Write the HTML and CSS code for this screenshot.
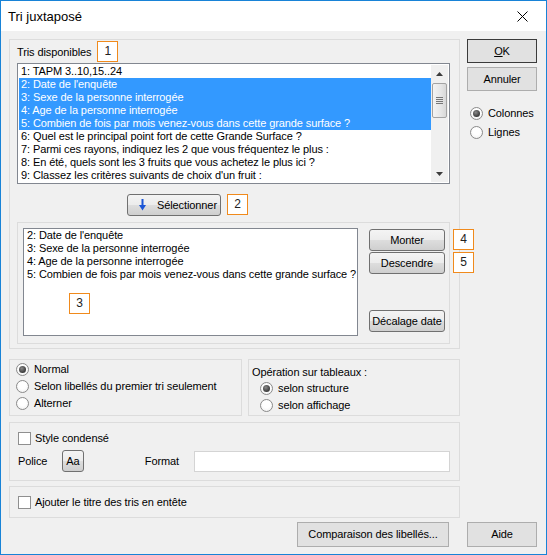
FILE: index.html
```html
<!DOCTYPE html>
<html lang="fr">
<head>
<meta charset="utf-8">
<title>Tri juxtaposé</title>
<link rel="stylesheet" href="styles.css">
</head>
<body>
<div class="window">
  <div class="titlebar">
    <span class="title">Tri juxtaposé</span>
    <svg class="close" width="11" height="11" viewBox="0 0 11 11"><path d="M0.5 0.5L10.5 10.5M10.5 0.5L0.5 10.5" stroke="#000" stroke-width="1" fill="none"/></svg>
  </div>
  <div class="body">
    <div class="top">
      <div class="group main">
        <div class="hdr"><span class="hdr-label">Tris disponibles</span><span class="tag tag-hdr">1</span></div>
        <div class="listbox">
          <div class="items">
            <div class="item">1: TAPM 3..10,15..24</div>
            <div class="item sel">2: Date de l'enquête</div>
            <div class="item sel">3: Sexe de la personne interrogée</div>
            <div class="item sel">4: Age de la personne interrogée</div>
            <div class="item sel">5: Combien de fois par mois venez-vous dans cette grande surface ?</div>
            <div class="item">6: Quel est le principal point fort de cette Grande Surface ?</div>
            <div class="item">7: Parmi ces rayons, indiquez les 2 que vous fréquentez le plus :</div>
            <div class="item">8: En été, quels sont les 3 fruits que vous achetez le plus ici ?</div>
            <div class="item">9: Classez les critères suivants de choix d'un fruit :</div>
          </div>
          <div class="vscroll">
            <div class="sb-arrow"><svg width="7" height="4" viewBox="0 0 7 4"><path d="M3.5 0L7 4H0Z" fill="#3c3c3c"/></svg></div>
            <div class="sb-track">
              <div class="sb-thumb"><span class="grip"></span><span class="grip"></span><span class="grip"></span><span class="grip"></span></div>
            </div>
            <div class="sb-arrow"><svg width="7" height="4" viewBox="0 0 7 4"><path d="M0 0H7L3.5 4Z" fill="#3c3c3c"/></svg></div>
          </div>
        </div>
        <div class="selrow">
          <button class="gbtn btn-sel"><svg width="7" height="12" viewBox="0 0 7 12"><rect x="2.5" y="0" width="2" height="7" fill="#1b55d6"/><path d="M0 6H7L3.5 11.5Z" fill="#1b55d6"/></svg><span>Sélectionner</span></button>
          <span class="tag">2</span>
        </div>
        <div class="group inner">
          <div class="textbox">
            <div>2: Date de l'enquête</div>
            <div>3: Sexe de la personne interrogée</div>
            <div>4: Age de la personne interrogée</div>
            <div>5: Combien de fois par mois venez-vous dans cette grande surface ?</div>
            <span class="tag tag-3">3</span>
          </div>
          <div class="btncol">
            <div class="btnwrap"><button class="gbtn btn-side">Monter</button><span class="tag tag-side">4</span></div>
            <div class="btnwrap btn-gap1"><button class="gbtn btn-side">Descendre</button><span class="tag tag-side">5</span></div>
            <div class="btnwrap btn-gap2"><button class="gbtn btn-side">Décalage date</button></div>
          </div>
        </div>
      </div>
      <div class="right">
        <button class="fbtn btn-ok"><u>O</u>K</button>
        <button class="fbtn btn-cancel">Annuler</button>
        <div class="radio-row r-first"><span class="radio on"></span><span>Colonnes</span></div>
        <div class="radio-row"><span class="radio"></span><span>Lignes</span></div>
      </div>
    </div>

    <div class="row-ab">
      <div class="group grp-a">
        <div class="radio-row"><span class="radio on"></span><span>Normal</span></div>
        <div class="radio-row"><span class="radio"></span><span>Selon libellés du premier tri seulement</span></div>
        <div class="radio-row"><span class="radio"></span><span>Alterner</span></div>
      </div>
      <div class="group grp-b">
        <div class="grp-title">Opération sur tableaux :</div>
        <div class="radio-row indent"><span class="radio on"></span><span>selon structure</span></div>
        <div class="radio-row indent"><span class="radio"></span><span>selon affichage</span></div>
      </div>
    </div>

    <div class="group grp-c">
      <div class="check-row"><span class="checkbox"></span><span>Style condensé</span></div>
      <div class="font-row">
        <span class="lbl-police">Police</span>
        <button class="gbtn btn-aa">Aa</button>
        <span class="lbl-format">Format</span>
        <span class="input"></span>
      </div>
    </div>

    <div class="group grp-d">
      <div class="check-row"><span class="checkbox"></span><span>Ajouter le titre des tris en entête</span></div>
    </div>

    <div class="bottom-row">
      <button class="fbtn btn-comp">Comparaison des libellés...</button>
      <button class="fbtn btn-aide">Aide</button>
    </div>
  </div>
</div>
</body>
</html>
```

FILE: styles.css
```css
* {
  box-sizing: border-box;
  margin: 0;
  padding: 0;
}

html, body {
  width: 547px;
  height: 555px;
  overflow: hidden;
}

body {
  font-family: "Liberation Sans", Arial, sans-serif;
  font-size: 11px;
  line-height: 13px;
  letter-spacing: -0.1px;
  color: #000;
  background: #fff;
}

button {
  font-family: inherit;
  font-size: 11px;
  letter-spacing: -0.1px;
  color: #000;
  line-height: 13px;
}

.window {
  width: 547px;
  height: 555px;
  border: 1px solid #1883d7;
  background: #f0f0f0;
  display: flex;
  flex-direction: column;
}

.titlebar {
  height: 30px;
  flex: none;
  background: #fff;
  display: flex;
  align-items: center;
  justify-content: space-between;
  padding: 0 18px 0 7px;
}

.title {
  font-size: 13px;
  letter-spacing: 0;
  color: #000;
}

.close {
  display: block;
}

.body {
  flex: 1;
  padding: 8px 9px 0 8px;
  display: flex;
  flex-direction: column;
}

.top {
  display: flex;
  gap: 7px;
}

.group {
  border: 1px solid #dcdcdc;
}

.main {
  width: 451px;
  height: 310px;
  padding: 0 9px 0 7px;
  flex: none;
}

.hdr {
  height: 23px;
  display: flex;
  align-items: flex-start;
}

.hdr-label {
  margin-top: 6px;
}

.tag {
  display: inline-flex;
  align-items: center;
  justify-content: center;
  width: 21px;
  height: 21px;
  border: 1px solid #f08a1c;
  background: #fff;
  font-size: 12px;
  letter-spacing: 0;
  color: #222;
}

.tag-hdr {
  margin: 1px 0 0 6px;
}

.listbox {
  width: 433px;
  height: 121px;
  border: 1px solid #828790;
  background: #fff;
  padding: 1px;
  display: flex;
}

.items {
  flex: 1;
  overflow: hidden;
}

.item {
  height: 13px;
  padding-left: 2px;
  white-space: nowrap;
}

.item.sel {
  background: #3399ff;
  color: #fff;
}

.vscroll {
  width: 17px;
  flex: none;
  background: #f0f0f0;
  display: flex;
  flex-direction: column;
}

.sb-arrow {
  height: 17px;
  display: flex;
  align-items: center;
  justify-content: center;
}

.sb-arrow svg {
  display: block;
}

.sb-track {
  flex: 1;
  padding: 1px 1px 0 1px;
}

.sb-thumb {
  height: 35px;
  border: 1px solid #a3a3a3;
  border-radius: 2px;
  background: linear-gradient(to right, #f4f4f4, #e6e6e6 60%, #d8d8d8);
  display: flex;
  flex-direction: column;
  align-items: center;
  justify-content: center;
  gap: 1px;
}

.grip {
  display: block;
  width: 7px;
  height: 1px;
  background: #777;
}

.selrow {
  margin-top: 10px;
  height: 22px;
  display: flex;
  align-items: flex-start;
  gap: 6px;
  padding-left: 110px;
}

.gbtn {
  border: 1px solid #707070;
  border-radius: 3px;
  background: linear-gradient(to bottom, #f4f4f4 0%, #ececec 48%, #dddddd 52%, #cfcfcf 100%);
  display: flex;
  align-items: center;
  justify-content: center;
}

.btn-sel {
  width: 94px;
  height: 22px;
  justify-content: flex-start;
  padding-left: 11px;
  gap: 11px;
}

.btn-sel svg {
  display: block;
  flex: none;
}

.inner {
  margin-top: 6px;
  width: 433px;
  height: 122px;
  padding: 5px 4px 0 5px;
  display: flex;
  gap: 11px;
}

.textbox {
  position: relative;
  width: 335px;
  height: 108px;
  border: 1px solid #828790;
  background: #fff;
  padding: 0 3px;
  white-space: nowrap;
  overflow: visible;
}

.tag-3 {
  position: absolute;
  left: 45px;
  top: 64px;
}

.btncol {
  width: 76px;
  padding-top: 1px;
  display: flex;
  flex-direction: column;
}

.btnwrap {
  position: relative;
}

.btn-gap1 {
  margin-top: 1px;
}

.btn-gap2 {
  margin-top: 36px;
}

.btn-side {
  width: 76px;
  height: 22px;
}

.tag-side {
  position: absolute;
  left: 84px;
  top: 0;
}

.right {
  width: 70px;
  flex: none;
  display: flex;
  flex-direction: column;
}

.fbtn {
  background: #e1e1e1;
  border: 1px solid #adadad;
  display: flex;
  align-items: center;
  justify-content: center;
}

.btn-ok {
  height: 24px;
  border-color: #3b3b3b;
}

.btn-cancel {
  height: 24px;
  margin-top: 4px;
}

.radio-row {
  display: flex;
  align-items: center;
  gap: 5px;
  height: 18px;
}

.r-first {
  margin-top: 13px;
  margin-bottom: 1px;
}

.right .radio-row {
  padding-left: 3px;
}

.radio {
  width: 13px;
  height: 13px;
  flex: none;
  border: 1px solid #8a8a8a;
  border-radius: 50%;
  background: radial-gradient(circle at 50% 40%, #ffffff 40%, #ececec 100%);
  display: flex;
  align-items: center;
  justify-content: center;
}

.radio.on::after {
  content: "";
  width: 7px;
  height: 7px;
  border-radius: 50%;
  background: radial-gradient(circle at 40% 35%, #8a8a8a, #3a3a3a 70%);
}

.row-ab {
  margin-top: 10px;
  display: flex;
  gap: 6px;
}

.grp-a {
  width: 233px;
  height: 57px;
  padding: 1px 6px 0 6px;
}

.grp-a .radio-row {
  height: 17px;
}

.grp-b {
  width: 212px;
  height: 57px;
  padding: 6px 3px 0 3px;
}

.grp-title {
  height: 13px;
  margin-bottom: 1px;
}

.grp-b .radio-row {
  height: 17px;
}

.indent {
  padding-left: 8px;
}

.grp-c {
  margin-top: 6px;
  width: 451px;
  height: 59px;
  padding: 9px 9px 0 8px;
}

.check-row {
  display: flex;
  align-items: center;
  gap: 4px;
  height: 13px;
}

.checkbox {
  width: 13px;
  height: 13px;
  flex: none;
  border: 1px solid #8f8f8f;
  background: #fff;
}

.font-row {
  margin-top: 5px;
  height: 22px;
  display: flex;
  align-items: center;
}

.lbl-police {
  width: 44px;
}

.btn-aa {
  width: 22px;
  height: 22px;
  padding: 0;
}

.lbl-format {
  margin-left: 61px;
  width: 49px;
}

.input {
  width: 257px;
  height: 21px;
  border: 1px solid #d4d4d4;
  background: #fff;
}

.grp-d {
  margin-top: 5px;
  width: 451px;
  height: 32px;
  padding: 9px 8px 0 8px;
}

.bottom-row {
  margin-top: 4px;
  display: flex;
  justify-content: flex-end;
  gap: 18px;
}

.btn-comp {
  width: 152px;
  height: 25px;
}

.btn-aide {
  width: 70px;
  height: 25px;
}
```
